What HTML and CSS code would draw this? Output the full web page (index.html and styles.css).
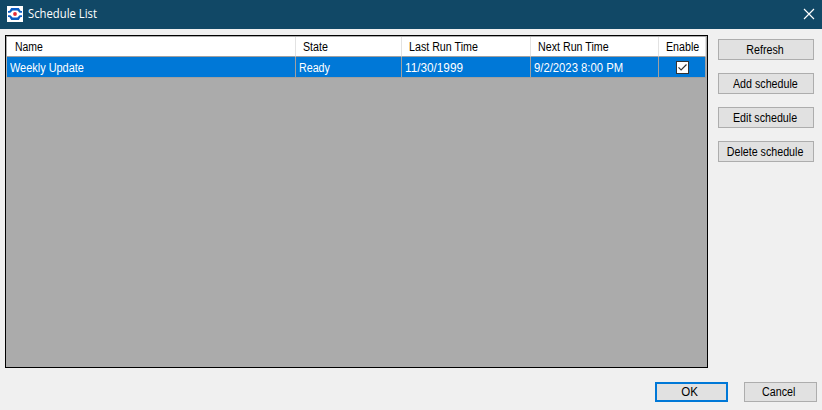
FILE: index.html
```html
<!DOCTYPE html>
<html lang="en">
<head>
<meta charset="utf-8">
<title>Schedule List</title>
<link rel="stylesheet" href="styles.css">
</head>
<body>
<div class="window">
  <header class="titlebar">
    <svg class="logo" width="16" height="16" viewBox="0 0 16 16">
      <rect width="16" height="16" fill="#fff"/>
      <path d="M1 6.8V5H2.4L4.2 2H11.8L13.6 5H15V6.8H12.6L10.4 4.6H5.6L3.4 6.8ZM1 9.2V11H2.4L4.2 14H11.8L13.6 11H15V9.2H12.6L10.4 11.4H5.6L3.4 9.2Z" fill="#0b5cc4"/>
      <circle cx="8" cy="8" r="1.9" fill="#e52a35"/>
    </svg>
    <h1 class="title"><span class="text">Schedule List</span></h1>
    <svg class="close" width="12" height="12" viewBox="0 0 12 12"><path d="M1 1L11 11M11 1L1 11" stroke="#fff" stroke-width="1.15" fill="none"/></svg>
  </header>
  <main class="content">
    <section class="grid">
      <div class="row head">
        <div class="cell"><span class="text tight">Name</span></div>
        <div class="cell"><span class="text">State</span></div>
        <div class="cell"><span class="text">Last Run Time</span></div>
        <div class="cell"><span class="text">Next Run Time</span></div>
        <div class="cell"><span class="text">Enable</span></div>
      </div>
      <div class="row selected">
        <div class="cell"><span class="text weekly">Weekly Update</span></div>
        <div class="cell"><span class="text">Ready</span></div>
        <div class="cell"><span class="text date">11/30/1999</span></div>
        <div class="cell"><span class="text datetime">9/2/2023 8:00 PM</span></div>
        <div class="cell check"><svg width="13" height="13" viewBox="0 0 13 13"><rect x=".5" y=".5" width="12" height="12" fill="#fff" stroke="#333"/><path d="M2.5 6.3L5.1 8.9L10.5 3.5" fill="none" stroke="#333" stroke-width="1.2"/></svg></div>
      </div>
    </section>
    <aside class="actions">
      <button class="button"><span class="text">Refresh</span></button>
      <button class="button"><span class="text">Add schedule</span></button>
      <button class="button"><span class="text">Edit schedule</span></button>
      <button class="button"><span class="text">Delete schedule</span></button>
    </aside>
  </main>
  <footer class="footer">
    <button class="button primary"><span class="text">OK</span></button>
    <button class="button"><span class="text">Cancel</span></button>
  </footer>
</div>
</body>
</html>
```
FILE: styles.css
```css
* { box-sizing: border-box; }
body { margin: 0; }
.window {
  width: 822px; height: 410px; background: #f0f0f0; color: #000;
  font: 12px/14px "Liberation Sans", Arial, sans-serif;
  white-space: nowrap; overflow: hidden;
}
.text { display: inline-block; transform: scaleX(.89); transform-origin: left center; }
.text.tight { transform: scaleX(.87); }
.text.weekly { transform: scaleX(.91); }
.text.date { transform: scaleX(.98); }
.text.datetime { transform: scaleX(.94); }
.titlebar { height: 29px; display: flex; align-items: center; padding: 0 7px 2px; background: #114866; color: #fff; }
.logo { margin-right: 5px; }
.title { margin: 1px 0 0; flex: 1; font: 12px/16px "Open Sans", "Noto Sans", sans-serif; }
.title .text { transform: scaleX(.94); }
.content { display: flex; gap: 10px; padding: 6px 8px 0 5px; }
.grid { width: 703px; height: 333px; border: 1px solid #000; background: #ababab; padding: 1px 1px 0; }
.row { display: grid; grid-template-columns: 289px 106px 129px 128px 47px; }
.cell { border-right: 1px solid #a0a0a0; border-bottom: 1px solid #a0a0a0; padding-left: 4px; }
.head { background: #fff; height: 20px; }
.head .cell { border-right-color: #e2e2e2; padding: 3px 0 0 8px; }
.head .cell:nth-child(n+2) { padding-left: 7px; }
.selected { height: 21px; background: #0078d7; color: #fff; }
.selected .cell { padding-top: 4px; padding-left: 3px; }
.selected .check { display: flex; align-items: center; justify-content: center; padding: 0; }
.actions { display: flex; flex-direction: column; gap: 13px; padding-top: 4px; }
.button {
  width: 96px; height: 21px; margin: 0; padding: 0 1px 0 0;
  border: 1px solid #adadad; background: #e1e1e1; color: #000;
  font: inherit;
}
.button .text { transform-origin: center; }
.footer { display: flex; justify-content: flex-end; gap: 16px; padding: 14px 5px 0 0; }
.footer .button { width: 73px; height: 20px; padding-right: 3px; }
.footer .primary { border: 2px solid #0078d7; }
.primary .text { transform: scaleX(.96); }
```
